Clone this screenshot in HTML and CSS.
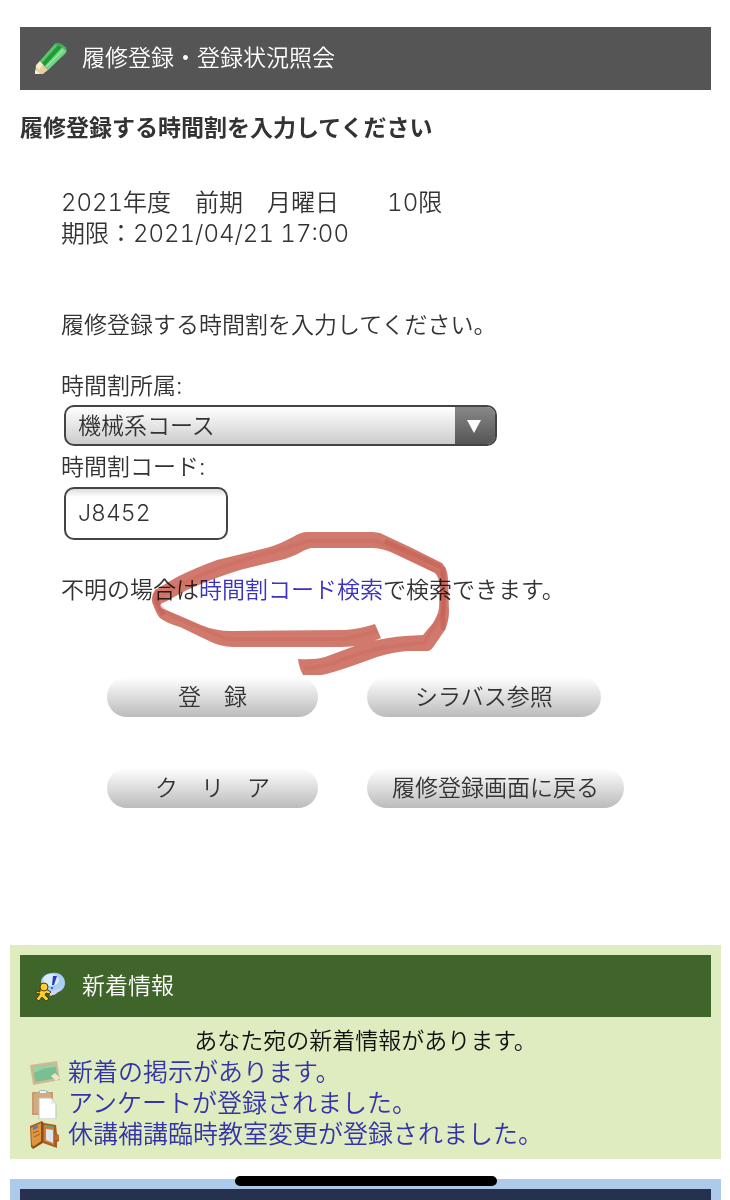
FILE: index.html
```html
<!DOCTYPE html>
<html lang="ja">
<head>
<meta charset="utf-8">
<meta name="viewport" content="width=device-width, initial-scale=1">
<title>履修登録・登録状況照会</title>
<link rel="stylesheet" href="styles.css">
</head>
<body>
<main class="register">
  <h1 class="bar">
    <svg class="bar-icon" viewBox="0 0 32 32" aria-hidden="true">
      <path d="M0 31 1 22 5 18 13 27 8 31Z" fill="#e6cfa2"/>
      <path d="M1 23 5 18 8 21 4 27Z" fill="#f6ecd2"/>
      <path d="M0 31 0 27 3 29 5 31Z" fill="#f3f0e8"/>
      <path d="M5 18 20 1Q24 -1 30 4Q33 8 30 11L13 27Z" fill="#5acb73"/>
      <path d="M5 18 20 1 23 2 8 21Z" fill="#5cc468"/>
      <path d="M7 20 23 2 27 4 10 23Z" fill="#229a38"/>
      <path d="M10 23 27 5 31 8 13 27Z" fill="#6fda87"/>
      <path d="M11 24 28 7" stroke="#a7efae" stroke-width="1"/>
      <path d="M20 1Q26 0 31 6" fill="none" stroke="#4aa456" stroke-width="2"/>
    </svg>
    <span>履修登録・登録状況照会</span>
  </h1>
  <h2 class="lead">履修登録する時間割を入力してください</h2>
  <form class="form">
    <p class="term">2021年度　前期　月曜日　　10限<br>期限：2021/04/21 17:00</p>
    <p class="guide">履修登録する時間割を入力してください。</p>
    <label for="dept">時間割所属:</label>
    <div class="select-box">
      <select id="dept" class="select"><option>機械系コース</option></select>
      <svg class="select-arrow" viewBox="0 0 40 37" aria-hidden="true"><path d="M12 13H26L19 26Z" fill="#fff"/></svg>
    </div>
    <label for="code">時間割コード:</label>
    <input id="code" class="code" type="text" value="J8452">
    <p class="hint">不明の場合は<a class="link" href="#">時間割コード検索</a>で検索できます。
      <svg class="marker" viewBox="150 530 302 148" aria-hidden="true">
        <path class="marker-ink" d="M375 624Q360 629 345 630L232 631Q215 631 201 625L178 615 161 608Q158 604 165 602L187 590Q214 578 240 570L285 559Q295 556 305 550L311 548H373Q383 548 397 555L435 573Q439 577 440 587L439 608Q438 615 433 623L423 635 405 636Q390 637 363 643L325 657Q315 660 298 659Q299 668 303 675H321Q331 674 377 657 393 652 408 651L428 651Q432 650 436 643L445 630Q449 621 449 611L448 580Q448 569 442 563L410 547 380 533 373 532H307Q301 532 293 537 282 543 270 547L217 560Q195 568 177 577L155 590Q149 598 154 607 157 615 160 618 166 623 180 627L207 640Q220 647 233 647H340Q362 647 381 638Z"/>
        <path class="marker-streak" d="M304 668Q322 668 350 657T424 643L444 610 443 575 378 541H308L282 549Q190 573 157 600 158 610 184 621L227 639H345L377 631"/>
        <path class="marker-edge" d="M443 630V567M158 591Q152 600 164 615M385 541 441 567"/>
      </svg>
    </p>
    <div class="actions">
      <button class="btn" type="submit">登　録</button>
      <button class="btn btn-wide" type="button">シラバス参照</button>
      <button class="btn" type="reset">ク　リ　ア</button>
      <button class="btn" type="button">履修登録画面に戻る</button>
    </div>
  </form>
</main>

<section class="panel news">
  <h2 class="bar bar-green">
    <svg class="bar-icon" viewBox="0 0 32 32" aria-hidden="true">
      <path d="M17 3C25 2 30 7 30 13 30 19 25 22 21 23Q20 25 15 25L16 22C9 20 6 16 6 11 7 7 11 3 17 3Z" fill="#a9cdf3"/>
      <ellipse cx="16" cy="10" rx="8" ry="6" fill="#d8ecff"/>
      <path d="M14 21Q20 22 27 17L21 24 15 26Z" fill="#d5d3fa"/>
      <path d="M18 6 22 6 19 15 17 15Z" fill="#2839bf"/><circle cx="17" cy="18" r="1" fill="#2839bf"/>
      <g stroke="#493c18" stroke-width="1" fill="#ffd027"><path d="M5 19 11 19 16 22 14 24 11 23 10 25 14 29 11 31 7 27 4 31 1 29 5 24 1 23 1 21 5 22Z"/><circle cx="9" cy="17" r="4"/></g>
    </svg>
    <span>新着情報</span>
  </h2>
  <p class="news-title">あなた宛の新着情報があります。</p>
  <ul class="news-list">
    <li class="news-item">
      <svg class="news-icon" viewBox="0 0 30 30" aria-hidden="true">
        <path d="M0 7 27 3 30 22 3 27Z" fill="#d3b791"/><path d="M3 9 25 6 28 20 5 24Z" fill="#79bf91"/><path d="M3 9 25 6 26 9Q14 9 4 15Z" fill="#98d1a8"/><path d="M21 18 25 15 30 20 26 23Z" fill="#eee3cd"/>
      </svg>
      <a class="link" href="#">新着の掲示があります。</a>
    </li>
    <li class="news-item">
      <svg class="news-icon" viewBox="0 0 30 30" aria-hidden="true">
        <path d="M2 3H23V26H2Z" fill="#c99b70"/><path d="M4 5H21V24H4Z" fill="#d4aa7e"/><path d="M6 5Q8 2 11 1H15Q19 2 20 5Z" fill="#a9b6b8"/><path d="M10 3H16" stroke="#eef5ed" stroke-width="2"/><path d="M9 9H21L26 15V30H9Z" fill="#fff" stroke="#bcc5ba"/><path d="M21 9V15H26" fill="#e9eeef"/>
      </svg>
      <a class="link" href="#">アンケートが登録されました。</a>
    </li>
    <li class="news-item">
      <svg class="news-icon" viewBox="0 0 30 30" aria-hidden="true">
        <path d="M0 6 12 1 14 3 26 5 27 14 29 15V21L27 22V28L13 23 3 29 1 27Z" fill="#a95c20"/><path d="M1 8 11 3V21L4 26 2 25Z" fill="#dd963e"/><path d="M3 7 8 5V8L3 10Z" fill="#6278b2"/><path d="M3 13 9 11M4 17 10 14" stroke="#a65a19"/><path d="M14 5 24 7V25L14 21Z" fill="#d17e35"/><path d="M16 9 23 10V23L16 20Z" fill="#dfe5ee"/><path d="M15 6 23 7" stroke="#6ca276" stroke-width="2"/><path d="M12 2V22L3 28" fill="none" stroke="#76401e"/><path d="M24 15H29V20H25Z" fill="#c7662c"/>
      </svg>
      <a class="link" href="#">休講補講臨時教室変更が登録されました。</a>
    </li>
  </ul>
</section>

<section class="panel next"><div class="next-bar"></div></section>
<div class="home-indicator"></div>
</body>
</html>
```
FILE: styles.css
```css
* { box-sizing: border-box; }
body {
  margin: 0;
  min-height: 100vh;
  display: flex;
  flex-direction: column;
  position: relative;
  padding: 27px 9px 0 10px;
  background: #fff;
  color: #333;
  font-family: Inter, "Noto Sans CJK JP", sans-serif;
  font-size: 23px;
  font-weight: 350;
  line-height: 31px;
}
h1, h2, p, ul { margin: 0; padding: 0; }
.register { padding: 0 10px; }
.bar {
  display: flex;
  align-items: center;
  gap: 15px;
  height: 63px;
  padding: 0 15px;
  background: #555;
  color: #fff;
  font-size: 23px;
  font-weight: 350;
}
.bar-green { height: 62px; background: #40652a; }
.bar-icon { width: 32px; height: 32px; flex: none; }
.lead { margin-top: 23px; font-size: 23px; font-weight: 700; }
.form { margin: 43px 0 0 41px; }
.term {
  margin-bottom: 61px;
  font-size: 24px;
  font-variant-numeric: tabular-nums;
}
.guide { margin-bottom: 30px; }
.form label { display: block; }
.select-box {
  position: relative;
  max-width: 433px;
  margin: 3px 3px 6px;
}
.select, .code {
  display: block;
  border: 2px solid #444;
  border-radius: 10px;
  color: #333;
  font: inherit;
}
.select {
  appearance: none;
  width: 100%;
  height: 41px;
  padding: 2px 52px 0 12px;
  background: linear-gradient(#fff, #ccc);
}
.select-arrow {
  position: absolute;
  top: 2px;
  right: 2px;
  width: 40px;
  height: 37px;
  border-radius: 0 8px 8px 0;
  background: linear-gradient(#888, #555);
  pointer-events: none;
}
.code {
  width: 164px;
  height: 53px;
  margin: 4px 3px 35px;
  padding: 0 12px 2px;
  background: linear-gradient(#ddd, #fff 8px);
  font-variant-numeric: tabular-nums;
}
.link { color: #33a; text-decoration: none; }
.hint { position: relative; }
.hint .link { color: #3a32c0; }
.marker {
  position: absolute;
  left: 89px;
  top: -45px;
  width: 302px;
  height: 148px;
  mix-blend-mode: multiply;
  pointer-events: none;
}
.marker-ink { fill: #d1796d; }
.marker-streak { fill: none; stroke: #c76557; stroke-width: 4; opacity: .3; }
.marker-edge { fill: none; stroke: #bd5345; stroke-width: 5; opacity: .4; }
.actions {
  display: grid;
  grid-template-columns: 211px auto;
  justify-content: start;
  justify-items: start;
  gap: 51px 49px;
  margin: 71px 0 0 46px;
}
.btn {
  min-width: 211px;
  height: 40px;
  padding: 0 25px;
  border: 0;
  border-radius: 20px;
  background: linear-gradient(#fff, #ddd 50%, #bbb);
  color: #333;
  font: inherit;
  white-space: nowrap;
}
.btn-wide { padding: 0 48px; }
.panel { padding: 10px; }
.news { margin-top: 137px; padding-bottom: 9px; background: #dfecc0; }
.news-title { margin-top: 9px; color: #111; text-align: center; }
.news-list { list-style: none; padding-left: 10px; }
.news-item { display: flex; align-items: center; gap: 8px; font-size: 25px; }
.news-icon { width: 30px; height: 30px; flex: none; }
.next {
  display: flex;
  flex: 1;
  margin-top: 20px;
  padding-bottom: 0;
  background: #adcaea;
}
.next-bar { flex: 1; background: #26304f; }
.home-indicator {
  position: absolute;
  bottom: 14px;
  left: 50%;
  width: 262px;
  height: 10px;
  margin-left: -130px;
  border-radius: 5px;
  background: #000;
}
```
